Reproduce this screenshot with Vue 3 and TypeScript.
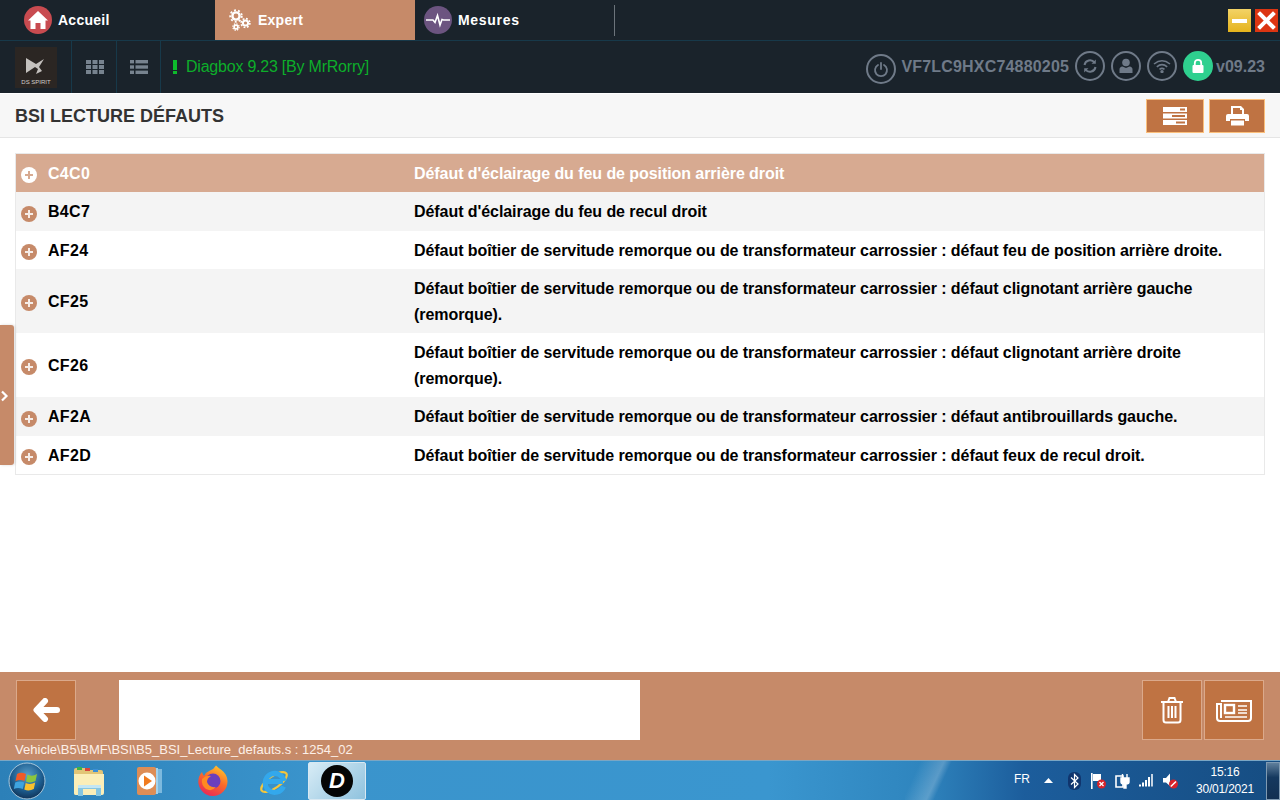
<script setup lang="ts">
interface Fault { code: string; text: string; tall?: boolean }
const faults: Fault[] = [
  { code: 'C4C0', text: "Défaut d'éclairage du feu de position arrière droit" },
  { code: 'B4C7', text: "Défaut d'éclairage du feu de recul droit" },
  { code: 'AF24', text: 'Défaut boîtier de servitude remorque ou de transformateur carrossier : défaut feu de position arrière droite.' },
  { code: 'CF25', text: 'Défaut boîtier de servitude remorque ou de transformateur carrossier : défaut clignotant arrière gauche (remorque).', tall: true },
  { code: 'CF26', text: 'Défaut boîtier de servitude remorque ou de transformateur carrossier : défaut clignotant arrière droite (remorque).', tall: true },
  { code: 'AF2A', text: 'Défaut boîtier de servitude remorque ou de transformateur carrossier : défaut antibrouillards gauche.' },
  { code: 'AF2D', text: 'Défaut boîtier de servitude remorque ou de transformateur carrossier : défaut feux de recul droit.' },
]
</script>

<template>
  <div class="screen">
    <nav class="tabs">
      <div class="tab">
        <svg class="tab-ico" width="28" height="28" viewBox="0 0 28 28"><circle cx="14" cy="14" r="14" fill="#c84b50"/><path d="M14 5 L24 14.5 L21.5 14.5 L21.5 23 L16.5 23 L16.5 17 L11.5 17 L11.5 23 L6.5 23 L6.5 14.5 L4 14.5 Z" fill="#fff"/></svg>
        <span>Accueil</span>
      </div>
      <div class="tab active">
        <svg class="tab-ico" width="28" height="28" viewBox="0 0 28 28"><g fill="none" stroke="#fff"><circle cx="10" cy="10" r="3.6" stroke-width="2.4"/><circle cx="10" cy="10" r="5.8" stroke-width="1.8" stroke-dasharray="2 2.1"/><circle cx="19.5" cy="17" r="2.6" stroke-width="2"/><circle cx="19.5" cy="17" r="4.4" stroke-width="1.6" stroke-dasharray="1.8 1.65"/><circle cx="10" cy="21" r="1.9" stroke-width="1.7"/><circle cx="10" cy="21" r="3.2" stroke-width="1.2" stroke-dasharray="1.4 1.1"/></g></svg>
        <span>Expert</span>
      </div>
      <div class="tab last">
        <svg class="tab-ico" width="28" height="28" viewBox="0 0 28 28"><circle cx="14" cy="14" r="14" fill="#6c5480"/><path d="M2 14 H9 L11 16.5 L13.5 9.5 L16 19 L18 13.5 L19.5 14 H26" fill="none" stroke="#fff" stroke-width="1.6"/></svg>
        <span>Mesures</span>
      </div>
      <div class="win-btns">
        <div class="win-btn min"><i></i></div>
        <div class="win-btn close">
          <svg width="23" height="23" viewBox="0 0 23 23"><path d="M5 5 L18 18 M18 5 L5 18" stroke="#fff" stroke-width="4" stroke-linecap="square"/></svg>
        </div>
      </div>
    </nav>

    <div class="toolbar">
      <div class="logo-cell">
        <div class="logo">
          <svg width="30" height="22" viewBox="0 0 30 22"><path d="M5 2 L15 8 L23 3 L18 11 L21 15 L15 18 L17 13 L14 11 L5 17 Z" fill="#c4c1be"/></svg>
          <span>DS SPIRIT</span>
        </div>
      </div>
      <div class="tool-cell first">
        <svg width="18" height="14" viewBox="0 0 18 14" fill="#77838f"><rect width="5" height="4"/><rect x="6.5" width="5" height="4"/><rect x="13" width="5" height="4"/><rect y="5" width="5" height="4"/><rect x="6.5" y="5" width="5" height="4"/><rect x="13" y="5" width="5" height="4"/><rect y="10" width="5" height="4"/><rect x="6.5" y="10" width="5" height="4"/><rect x="13" y="10" width="5" height="4"/></svg>
      </div>
      <div class="tool-cell">
        <svg width="18" height="14" viewBox="0 0 18 14" fill="#77838f"><rect width="4" height="3.4"/><rect x="5.5" width="12.5" height="3.4"/><rect y="5.3" width="4" height="3.4"/><rect x="5.5" y="5.3" width="12.5" height="3.4"/><rect y="10.6" width="4" height="3.4"/><rect x="5.5" y="10.6" width="12.5" height="3.4"/></svg>
      </div>
      <div class="status">
        <svg width="5" height="14" viewBox="0 0 5 14" fill="#0dbb2c"><rect width="4" height="10"/><rect y="11" width="4" height="3"/></svg>
        <span>Diagbox 9.23 [By MrRorry]</span>
      </div>
      <div class="vehicle">
        <div class="ring power">
          <svg width="18" height="18" viewBox="0 0 18 18" fill="none" stroke="#6f7a88" stroke-width="1.8" stroke-linecap="round"><path d="M6 5 A6 6 0 1 0 12 5"/><path d="M9 3 V9"/></svg>
        </div>
        <span class="vin">VF7LC9HXC74880205</span>
        <div class="ring">
          <svg width="16" height="16" viewBox="0 0 16 16" fill="none" stroke="#6f7a88" stroke-width="2"><path d="M2.5 7 A5.6 5.6 0 0 1 12.5 4.5"/><path d="M13.5 9 A5.6 5.6 0 0 1 3.5 11.5"/><path d="M13.8 1.5 V5.8 H9.5 Z M2.2 14.5 V10.2 H6.5 Z" fill="#6f7a88" stroke="none"/></svg>
        </div>
        <div class="ring">
          <svg width="14" height="16" viewBox="0 0 14 16" fill="#6f7a88"><circle cx="7" cy="4.5" r="3.8"/><path d="M0.5 15 V11.5 Q0.5 8.8 3.5 8.5 L7 10 L10.5 8.5 Q13.5 8.8 13.5 11.5 V15 Z"/></svg>
        </div>
        <div class="ring">
          <svg width="18" height="14" viewBox="0 0 18 14" fill="none" stroke="#6f7a88" stroke-width="1.6"><path d="M1 5 Q9 -1.5 17 5"/><path d="M3.8 7.8 Q9 3.4 14.2 7.8"/><path d="M6.5 10.4 Q9 8.4 11.5 10.4"/><circle cx="9" cy="12.6" r="0.9" fill="#6f7a88"/></svg>
        </div>
        <div class="ring lock">
          <svg width="14" height="16" viewBox="0 0 14 16"><path d="M3.8 7.5 V5 A3.2 3.2 0 0 1 10.2 5 V7.5" fill="none" stroke="#fff" stroke-width="1.8"/><rect x="1.5" y="7" width="11" height="8" rx="1" fill="#fff"/></svg>
        </div>
        <span class="version">v09.23</span>
      </div>
    </div>

    <header class="title-bar">
      <h1>BSI LECTURE DÉFAUTS</h1>
      <div class="title-actions">
        <button class="head-btn wide">
          <svg width="24" height="18" viewBox="0 0 24 18"><g fill="#fff"><rect width="24" height="5"/><rect y="6.5" width="24" height="5"/><rect y="13" width="24" height="5"/></g><g fill="#bf7343"><rect x="17" y="1.5" width="5" height="2"/><rect x="9" y="8" width="13" height="2"/><rect x="13" y="14.5" width="9" height="2"/></g></svg>
        </button>
        <button class="head-btn">
          <svg width="23" height="21" viewBox="0 0 23 21" fill="#fff"><path d="M5 0 H15 L18 3 V8 H16 V4 H14 V2 H7 V8 H5 Z"/><path d="M2 8 H21 Q23 8 23 10 V15 H19 V13 H4 V15 H0 V10 Q0 8 2 8 Z"/><rect x="5" y="14.5" width="13" height="5"/></svg>
        </button>
      </div>
    </header>

    <main class="content">
      <div class="side-tab">
        <svg width="9" height="12" viewBox="0 0 9 12"><path d="M2 1.5 L6.5 6 L2 10.5" fill="none" stroke="#fff" stroke-width="2.2"/></svg>
      </div>
      <div class="fault-table">
        <div v-for="(f, i) in faults" :key="f.code" class="fault" :class="{ selected: i === 0, odd: i % 2 === 1, tall: f.tall }">
          <svg class="plus" width="16" height="16" viewBox="0 0 16 16">
            <circle cx="8" cy="8" r="8" class="plus-bg"/>
            <path d="M8 4 V12 M4 8 H12" class="plus-fg" stroke-width="2"/>
          </svg>
          <div class="code">{{ f.code }}</div>
          <div class="text">{{ f.text }}</div>
        </div>
      </div>
    </main>

    <footer class="footer">
      <div class="foot-row">
        <button class="foot-btn back">
          <svg width="27" height="24" viewBox="0 0 27 24"><path d="M12 3 L3.5 12 L12 21 M4 12 H24" fill="none" stroke="#fff" stroke-width="6" stroke-linecap="round" stroke-linejoin="round"/></svg>
        </button>
        <div class="message"></div>
        <div class="foot-right">
          <button class="foot-btn">
            <svg width="24" height="28" viewBox="0 0 24 28" fill="none" stroke="#fff" stroke-width="2"><path d="M1 6 H23"/><path d="M8 6 L9.5 2 H14.5 L16 6"/><path d="M3.5 6 V24 Q3.5 26.5 6 26.5 H18 Q20.5 26.5 20.5 24 V6"/><path d="M8.5 10 V22 M12 10 V22 M15.5 10 V22"/></svg>
          </button>
          <button class="foot-btn">
            <svg width="36" height="24" viewBox="0 0 36 24" fill="none" stroke="#fff" stroke-width="2"><path d="M5 3 H35 V20 Q35 23 32 23 H4 Q1 23 1 20 V6 H5 V20"/><rect x="9" y="7" width="9" height="8" stroke-width="2.4"/><path d="M22 8 H31 M22 12 H31 M22 15 H31 M9 19 H31" stroke-width="1.6"/></svg>
          </button>
        </div>
      </div>
      <div class="path">Vehicle\B5\BMF\BSI\B5_BSI_Lecture_defauts.s : 1254_02</div>
    </footer>

    <div class="taskbar">
      <div class="streak"></div>
      <div class="task-left">
        <svg class="orb" width="38" height="38" viewBox="0 0 38 38">
          <defs><radialGradient id="orbg" cx="50%" cy="35%" r="70%"><stop offset="0" stop-color="#5aa0cc"/><stop offset="0.6" stop-color="#1c5c8e"/><stop offset="1" stop-color="#0d2a4c"/></radialGradient></defs>
          <circle cx="19" cy="19" r="18" fill="url(#orbg)" stroke="#a8c8dc" stroke-width="1"/>
          <path d="M9 12 Q13 9.5 18 12 L16.5 19 Q12 17 7.5 19 Z" fill="#ef5a28"/>
          <path d="M19.5 12.5 Q24 15 29 12 L27.5 19 Q22.5 21.5 18 19.5 Z" fill="#8cc63e"/>
          <path d="M7.2 20.5 Q12 18.5 16.2 20.5 L14.8 27 Q10 25 5.8 27 Z" fill="#3ea4e0"/>
          <path d="M17.7 21 Q22.5 23 27.2 20.5 L25.8 27 Q21 29.5 16.3 27.5 Z" fill="#fbc12d"/>
        </svg>
        <svg class="t-folder" width="32" height="32" viewBox="0 0 32 32">
          <path d="M1 5 Q1 3 3 3 H12 L14 5 H28 Q30 5 30 7 V28 Q30 30 28 30 H3 Q1 30 1 28 Z" fill="#e2c577"/>
          <rect x="4" y="2" width="5" height="3" fill="#3bb24a"/><rect x="12" y="3" width="5" height="3" fill="#d8443c"/><rect x="20" y="4" width="5" height="3" fill="#3a8fd8"/>
          <path d="M1 9 H31 V28 Q31 30 29 30 H3 Q1 30 1 28 Z" fill="#fbeeb8"/>
          <path d="M5 31 V20 H28 V31 H23 V24 H10 V31 Z" fill="#86c6e2"/>
          <path d="M5 20 H28 V23 H5 Z" fill="#c3e6f4"/>
        </svg>
        <svg class="t-media" width="26" height="32" viewBox="0 0 26 32">
          <rect x="15" y="4" width="10" height="24" fill="#7cb9de"/><rect x="11" y="3" width="10" height="26" fill="#a3d2ec"/>
          <rect x="0" y="2" width="19" height="28" rx="2" fill="#dd8d56"/>
          <circle cx="10" cy="16" r="8.5" fill="#fff"/>
          <path d="M7 10.5 L15 16 L7 21.5 Z" fill="#f17b1e"/>
        </svg>
        <svg class="t-ff" width="32" height="32" viewBox="0 0 32 32">
          <defs><linearGradient id="ffg" x1="0.7" y1="0" x2="0.2" y2="1"><stop offset="0" stop-color="#ffc22c"/><stop offset="0.45" stop-color="#fa6a2a"/><stop offset="1" stop-color="#e8245c"/></linearGradient></defs>
          <path d="M16 31 A14.5 14.5 0 0 1 2 12 Q3 9 5 7 Q5.5 9.5 7 11 Q9 7 13 5.5 Q17 4 19 0.5 Q22 3.5 24.5 5 Q30 9 30.5 16 A14.5 14.5 0 0 1 16 31 Z" fill="url(#ffg)"/>
          <circle cx="16" cy="16" r="7.5" fill="#6b3fbd"/>
          <path d="M5 14 Q9 10 14 11 Q10 13 10 17 Q12 23 19 22 Q15 27 9 24 Q4 20 5 14 Z" fill="#ff8a22"/>
        </svg>
        <svg class="t-ie" width="32" height="32" viewBox="0 0 32 32">
          <ellipse cx="15" cy="17" rx="15" ry="6" transform="rotate(-35 15 17)" fill="none" stroke="#f4c63c" stroke-width="2.2"/>
          <path d="M8 16.5 H24 M24.5 21.5 A9.5 9.5 0 1 1 25 16" fill="none" stroke="#33a8ec" stroke-width="5"/>
        </svg>
        <div class="t-active">
          <svg width="32" height="32" viewBox="0 0 32 32"><circle cx="16" cy="16" r="16" fill="#050505"/></svg>
          <span class="d-letter">D</span>
        </div>
      </div>
      <div class="tray">
        <span class="lang">FR</span>
        <svg width="9" height="5" viewBox="0 0 9 5"><path d="M4.5 0 L9 5 H0 Z" fill="#fff"/></svg>
        <svg class="bt" width="13" height="18" viewBox="0 0 13 18"><rect width="13" height="18" rx="6" fill="#10356e"/><path d="M3 5.5 L10 12 L6.5 15.5 V2.5 L10 6 L3 12.5" fill="none" stroke="#fff" stroke-width="1.2"/></svg>
        <svg width="15" height="16" viewBox="0 0 15 16"><rect width="1.6" height="16" fill="#fff"/><path d="M2 1 H10 V8 H2 Z" fill="#fff"/><circle cx="10.5" cy="11" r="4.5" fill="#d8232a"/><path d="M8.5 9 L12.5 13 M12.5 9 L8.5 13" stroke="#fff" stroke-width="1.3"/></svg>
        <svg width="15" height="16" viewBox="0 0 15 16"><path d="M1 3 H8 V14 H1 Z" fill="none" stroke="#fff" stroke-width="1.6"/><path d="M6 5 H14 V9 Q14 11 11 11 V15 H9 V11 Q6 11 6 9 Z M7.5 1 V5 M12 1 V5" fill="#fff" stroke="#fff" stroke-width="1.4"/></svg>
        <svg width="15" height="13" viewBox="0 0 15 13" fill="#fff"><rect y="10.5" width="2" height="2"/><rect x="3" y="8.5" width="2" height="4"/><rect x="6" y="6" width="2" height="6.5"/><rect x="9" y="3" width="2" height="9.5"/><rect x="12" width="2" height="12.5" opacity="0.75"/></svg>
        <svg class="spk" width="15" height="16" viewBox="0 0 15 16"><path d="M0 5 H3 L7 0.5 V13 L3 9.5 H0 Z" fill="#fff"/><circle cx="10.5" cy="11" r="4.5" fill="#d8232a"/><path d="M7.8 13.5 L13 8.5" stroke="#fff" stroke-width="1.5"/></svg>
        <div class="clock"><span>15:16</span><span>30/01/2021</span></div>
        <div class="show-desktop"></div>
      </div>
    </div>
  </div>
</template>

<style scoped>
.screen {
  width: 1280px;
  height: 800px;
  overflow: hidden;
  display: flex;
  flex-direction: column;
  font-family: "Liberation Sans", Arial, sans-serif;
  background: #fff;
}
.tabs {
  height: 40px;
  flex: none;
  display: flex;
  background: #1a232b;
  box-sizing: content-box;
  border-bottom: 1px solid #17394a;
}
.tab {
  width: 200px;
  display: flex;
  align-items: center;
  gap: 6px;
  padding-left: 9px;
  box-sizing: border-box;
  color: #fff;
  font-size: 14px;
  font-weight: 700;
  letter-spacing: 0.25px;
}
.tab:first-child {
  width: 215px;
  padding-left: 24px;
}
.tab.active {
  background: #c68a69;
  padding-left: 11px;
  gap: 4px;
}
.tab.last { position: relative; letter-spacing: 0.7px; }
.tab.last::after {
  content: "";
  position: absolute;
  right: 0;
  top: 5px;
  height: 31px;
  width: 1px;
  background: #6c747b;
}
.win-btns {
  margin-left: auto;
  display: flex;
  gap: 4px;
  padding: 9px 2px 0 0;
}
.win-btn {
  width: 23px;
  height: 23px;
  display: flex;
  align-items: center;
  justify-content: center;
}
.win-btn.min {
  background: linear-gradient(#f3d366, #e5b31c);
}
.win-btn.min i {
  display: block;
  width: 15px;
  height: 4px;
  background: #fff;
}
.win-btn.close {
  background: #dc3512;
}
.toolbar {
  height: 52px;
  flex: none;
  display: flex;
  align-items: stretch;
  background: #1a232b;
}
.logo-cell {
  width: 72px;
  display: flex;
  align-items: center;
  padding-left: 15px;
  box-sizing: border-box;
  border-right: 1px solid #17394a;
}
.logo {
  width: 42px;
  height: 41px;
  background: #2b2623;
  display: flex;
  flex-direction: column;
  align-items: center;
  justify-content: flex-end;
  padding-bottom: 2px;
  box-sizing: border-box;
}
.logo span {
  font-size: 6px;
  color: #d0cdca;
  white-space: nowrap;
  line-height: 8px;
}
.tool-cell {
  width: 43px;
  margin-left: 1px;
  display: flex;
  align-items: center;
  justify-content: center;
  box-sizing: border-box;
  border-right: 1px solid #17394a;
}
.tool-cell.first { width: 44px; }
.status {
  display: flex;
  align-items: center;
  gap: 9px;
  padding-left: 12px;
  color: #0dae2a;
  font-size: 16px;
  letter-spacing: -0.22px;
}
.status svg { margin-top: -1px; margin-right: -1px; }
.vehicle {
  margin-left: auto;
  display: flex;
  align-items: center;
  gap: 6px;
  padding: 0 15px 0 0;
  color: #6f7a88;
  font-weight: 700;
  font-size: 16px;
}
.ring {
  width: 30px;
  height: 30px;
  border: 2px solid #6f7a88;
  border-radius: 50%;
  box-sizing: border-box;
  display: flex;
  align-items: center;
  justify-content: center;
  margin-top: -3px;
}
.ring.power { margin: 3px -1px 0 0; }
.ring.lock {
  background: #2fd08f;
  border-color: #2fd08f;
  margin-right: -3px;
}
.vin { letter-spacing: 0.18px; white-space: nowrap; }
.title-bar {
  height: 45px;
  flex: none;
  box-sizing: border-box;
  display: flex;
  align-items: center;
  justify-content: space-between;
  padding: 0 15px;
  background: #f7f7f7;
  border-top: 1px solid #fff;
  border-bottom: 1px solid #e5e5e5;
}
.title-bar h1 {
  margin: 2px 0 0;
  font-size: 18px;
  font-weight: 700;
  color: #333;
}
.title-actions {
  display: flex;
  gap: 5px;
  padding-top: 1px;
}
.head-btn {
  width: 56px;
  height: 34px;
  padding: 0;
  background: #bf7343;
  border: 1px solid #fbbf7b;
  display: flex;
  align-items: center;
  justify-content: center;
}
.head-btn.wide { width: 58px; }
.content {
  flex: 1;
  position: relative;
  padding: 15px 15px 0;
  min-height: 0;
}
.side-tab {
  position: absolute;
  left: 0;
  top: 187px;
  width: 14px;
  height: 140px;
  background: #c68a69;
  border-radius: 0 3px 3px 0;
  display: flex;
  align-items: center;
  box-shadow: 1px 0 3px rgba(0, 0, 0, 0.15);
}
.side-tab svg { margin-top: 1px; }
.fault-table {
  border: 1px solid #e9e9e9;
}
.fault {
  display: flex;
  align-items: center;
  height: 38px;
  background: #fff;
  color: #000;
  font-size: 16px;
  font-weight: 700;
  line-height: 26px;
}
.fault.odd { height: 39px; background: #f4f4f4; }
.fault.tall { height: 64px; }
.fault.selected {
  background: #d7aa91;
  color: #fff;
}
.plus {
  flex: none;
  margin: 4px 11px 0 5px;
}
.plus-bg { fill: #c68a69; }
.plus-fg { stroke: #fff; opacity: 0.85; }
.fault.selected .plus-bg { fill: #fff; }
.fault.selected .plus-fg { stroke: #d7aa91; opacity: 1; }
.code {
  width: 366px;
  flex: none;
  margin-top: 1px;
  letter-spacing: 0.3px;
}
.text {
  flex: 1;
  padding-right: 10px;
  margin-top: 1px;
  letter-spacing: -0.065px;
}
.footer {
  height: 88px;
  flex: none;
  box-sizing: border-box;
  background: #c68a69;
  padding: 8px 16px 0;
}
.foot-row {
  display: flex;
  height: 60px;
}
.foot-btn {
  width: 60px;
  height: 60px;
  padding: 0;
  background: #bf7343;
  border: 1px solid #dba98b;
  display: flex;
  align-items: center;
  justify-content: center;
}
.message {
  width: 521px;
  height: 60px;
  margin-left: 43px;
  background: #fff;
}
.foot-right {
  margin-left: auto;
  display: flex;
  gap: 2px;
}
.path {
  font-size: 13px;
  color: #fdf0e8;
  line-height: 20px;
  margin-left: -1px;
  letter-spacing: 0.02px;
}
.taskbar {
  height: 40px;
  flex: none;
  position: relative;
  overflow: hidden;
  display: flex;
  justify-content: space-between;
  background: linear-gradient(90deg, #2c80b8 0%, #3a94cc 25%, #3a96cf 60%, #2f85be 72%, #1c5d9c 80%, #164d82 100%);
  border-top: 1px solid #7aa6c4;
  box-sizing: border-box;
}
.streak {
  position: absolute;
  left: 905px;
  top: 0;
  width: 60px;
  height: 40px;
  background: linear-gradient(115deg, transparent 20%, rgba(255, 255, 255, 0.22) 50%, transparent 60%);
}
.task-left {
  position: relative;
  display: flex;
  align-items: center;
  padding-left: 8px;
}
.t-folder { margin-left: 27px; }
.t-media { margin-left: 32px; }
.t-ff { margin-left: 34px; }
.t-ie { margin-left: 30px; }
.t-active {
  margin-left: 17px;
  width: 58px;
  height: 38px;
  box-sizing: border-box;
  border: 1px solid #d8e8f2;
  border-radius: 2px;
  background: linear-gradient(135deg, #d8ecf6, #8fc2de);
  display: flex;
  align-items: center;
  justify-content: center;
  position: relative;
}
.d-letter {
  position: absolute;
  inset: 0;
  display: flex;
  align-items: center;
  justify-content: center;
  color: #fff;
  font-size: 22px;
  font-weight: 700;
  font-style: italic;
}
.tray {
  position: relative;
  display: flex;
  align-items: center;
  color: #fff;
  gap: 9px;
}
.lang {
  font-size: 12px;
  margin-right: 5px;
  margin-top: -4px;
}
.bt { margin: 0 1px 0 6px; }
.clock {
  display: flex;
  flex-direction: column;
  align-items: center;
  width: 64px;
  margin-left: 6px;
  font-size: 12px;
  line-height: 17px;
  letter-spacing: -0.2px;
}
.show-desktop {
  width: 14px;
  height: 38px;
  background: linear-gradient(#5f7f9c, #15395f 40%, #123052);
  border: 1px solid #7f9ab2;
  box-sizing: border-box;
}
</style>
